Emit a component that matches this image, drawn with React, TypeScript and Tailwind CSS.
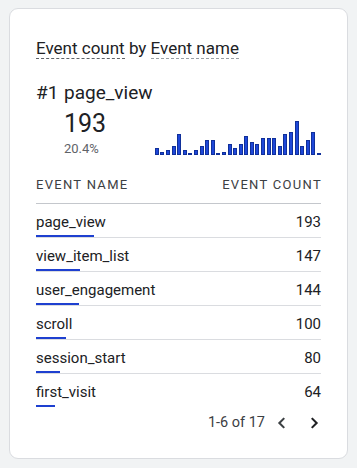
const bars = [7, 3, 5, 9, 21, 5, 1, 5, 9, 15, 15, 1, 3, 11, 7, 11, 19, 13, 11, 17, 17, 17, 9, 21, 23, 34, 9, 15, 23, 1];

const rows = [
  { name: "page_view", count: 193 },
  { name: "view_item_list", count: 147 },
  { name: "user_engagement", count: 144 },
  { name: "scroll", count: 100 },
  { name: "session_start", count: 80 },
  { name: "first_visit", count: 64 },
];

export default function App() {
  return (
    <div className="min-h-[468px] w-[357px] bg-[#f1f3f4] px-[9px] pt-[8px] pb-[10px] font-['Roboto',sans-serif] text-[#202124]">
      <div className="rounded-[9px] border border-[#dadce0] bg-white pl-[26px] pr-[26px] pt-[28px] pb-[25px]">
        <div className="text-[17px] leading-[22px]">
          <span className="border-b border-dashed border-[#5f6368]">Event count</span> by{" "}
          <span className="border-b border-dashed border-[#9aa0a6]">Event name</span>
        </div>

        <div className="mt-[22px] flex">
          <div className="w-[28px] text-[19px] leading-[24px]">#1</div>
          <div className="flex-1">
            <div className="text-[19px] leading-[24px]">page_view</div>
            <div className="flex items-end justify-between">
              <div>
                <div className="mt-[4px] text-[25px] leading-[30px]">193</div>
                <div className="mt-[2px] text-[13px] leading-[16px] text-[#5f6368]">20.4%</div>
              </div>
              <div className="mb-[2px] flex items-end gap-[1.6px]">
                {bars.map((h, i) => (
                  <div
                    key={i}
                    className="w-[4px] border border-[#10309a] bg-[#1e47d8]"
                    style={{ height: Math.max(h, 1) }}
                  />
                ))}
              </div>
            </div>
          </div>
        </div>

        <div className="mt-[19px] flex justify-between border-b border-[#c4c7cc] pb-[9px] text-[13px] leading-[18px] tracking-[0.1em] text-[#3c4043]">
          <span>EVENT NAME</span>
          <span className="-mr-[1px]">EVENT COUNT</span>
        </div>

        {rows.map((r, i) => (
          <div
            key={r.name}
            className={i < rows.length - 1 ? "border-b border-[#dadce0] pt-[8px]" : "pt-[8px]"}
          >
            <div className="flex justify-between text-[15px] leading-[20px]">
              <span>{r.name}</span>
              <span>{r.count}</span>
            </div>
            <div className="mt-[3px] h-[2px] bg-[#1e40d0]" style={{ width: r.count * 0.3 }} />
          </div>
        ))}

        <div className="mt-[6px] flex items-center justify-end text-[14.5px] leading-[20px] text-[#3c4043]">
          <span>1-6 of 17</span>
          <svg className="ml-[8px]" width="18" height="18" viewBox="0 0 24 24" fill="none" stroke="#3c4043" strokeWidth="2.8">
            <path d="M15 5.5l-6.5 6.5 6.5 6.5" />
          </svg>
          <svg className="-mr-[2px] ml-[14px]" width="18" height="18" viewBox="0 0 24 24" fill="none" stroke="#202124" strokeWidth="2.8">
            <path d="M9 5.5l6.5 6.5-6.5 6.5" />
          </svg>
        </div>
      </div>
    </div>
  );
}
